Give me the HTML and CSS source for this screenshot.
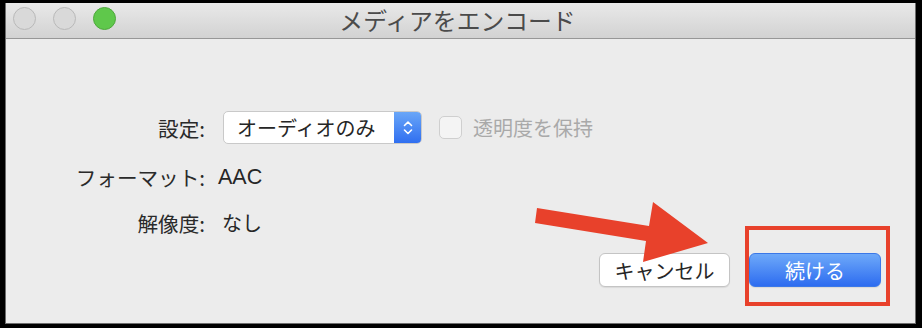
FILE: index.html
```html
<!DOCTYPE html>
<html lang="ja">
<head>
<meta charset="utf-8">
<title>メディアをエンコード</title>
<link rel="stylesheet" href="styles.css">
</head>
<body>
<div class="window">
  <div class="titlebar">
    <div class="lights">
      <span class="light"></span>
      <span class="light"></span>
      <span class="light green"></span>
    </div>
    <div class="title">メディアをエンコード</div>
  </div>
  <div class="content">
    <div class="form">
      <div class="label">設定:</div>
      <div class="value row-controls">
        <div class="popup">
          <span class="popup-text">オーディオのみ</span>
          <span class="stepper">
            <svg width="28" height="33" viewBox="0 0 28 33"><path d="M10.5 14.5 L14 11 L17.5 14.5" fill="none" stroke="#fff" stroke-width="1.6" stroke-linecap="round" stroke-linejoin="round"/><path d="M10.5 19 L14 22.5 L17.5 19" fill="none" stroke="#fff" stroke-width="1.6" stroke-linecap="round" stroke-linejoin="round"/></svg>
          </span>
        </div>
        <span class="checkbox"></span>
        <span class="check-label">透明度を保持</span>
      </div>
      <div class="label">フォーマット:</div>
      <div class="value latin">AAC</div>
      <div class="label">解像度:</div>
      <div class="value">なし</div>
    </div>
    <div class="buttons">
      <button class="btn">キャンセル</button>
      <button class="btn primary">続ける</button>
    </div>
  </div>
</div>
<svg class="annotation" width="922" height="328" viewBox="0 0 922 328">
  <polygon points="537,208 649,226 653,202 708,243 643,262 646,241 535,223" fill="#e8412b"/>
  <rect x="747" y="228" width="141" height="76" fill="none" stroke="#e8412b" stroke-width="4"/>
</svg>
</body>
</html>
```
FILE: styles.css
```css
html, body {
  margin: 0;
  padding: 0;
}
body {
  width: 922px;
  height: 328px;
  background: #000;
  overflow: hidden;
  position: relative;
  font-family: "Noto Sans CJK JP", sans-serif;
  color: #262626;
}
.window {
  box-sizing: border-box;
  margin: 3px 0 0 5px;
  width: 911px;
  height: 321px;
  background: #ececec;
  border: 1px solid #6e6e6e;
  border-top: none;
  display: flex;
  flex-direction: column;
}
.titlebar {
  position: relative;
  height: 36px;
  box-sizing: border-box;
  background: linear-gradient(#e9e9e9, #d2d2d2);
  border-bottom: 1px solid #979797;
  display: flex;
  align-items: flex-start;
}
.lights {
  display: flex;
  gap: 17px;
  padding: 4px 0 0 7px;
}
.light {
  width: 21px;
  height: 21px;
  border-radius: 50%;
  background: #d9d9d9;
  border: 1px solid #b9b9b9;
}
.light.green {
  background: #5fc84b;
  border-color: #4ea83c;
}
.title {
  position: absolute;
  left: 0;
  right: 0;
  top: 2px;
  text-align: center;
  font-size: 23.8px;
  line-height: 30px;
  color: #4b4b4b;
  padding-right: 6px;
}
.content {
  flex: 1;
  display: flex;
  flex-direction: column;
  padding: 72px 34px 36px 0;
}
.form {
  display: grid;
  grid-template-columns: 199px 1fr;
  column-gap: 17px;
  row-gap: 20px;
  align-items: center;
  font-size: 20px;
  line-height: 26px;
}
.label {
  text-align: right;
  font-size: 20.6px;
  color: #2a2a2a;
}
.value {
  color: #262626;
}
.value.latin {
  font-family: "Liberation Sans", sans-serif;
  font-size: 21.5px;
  margin-left: -4px;
}
.row-controls {
  display: flex;
  align-items: center;
}
.popup {
  box-sizing: border-box;
  width: 199px;
  height: 33px;
  display: flex;
  align-items: stretch;
  background: #fff;
  border: 1px solid #c9c9c9;
  border-radius: 5px;
  overflow: hidden;
  margin-left: 1px;
}
.popup-text {
  flex: 1;
  padding-left: 13px;
  line-height: 31px;
  font-size: 20px;
  color: #262626;
}
.stepper {
  width: 28px;
  margin: -1px -1px -1px 0;
  background: linear-gradient(#6ba8f8, #2e6df0);
  display: flex;
  align-items: center;
  justify-content: center;
}
.stepper svg {
  display: block;
}
.checkbox {
  box-sizing: border-box;
  width: 23px;
  height: 23px;
  margin-left: 17px;
  border: 1px solid #cfcfcf;
  border-radius: 5px;
  background: #f4f4f4;
}
.check-label {
  margin-left: 11px;
  color: #a9a9a9;
}
.buttons {
  margin-top: auto;
  display: flex;
  justify-content: flex-end;
  gap: 19px;
}
.btn {
  box-sizing: border-box;
  width: 131px;
  height: 34px;
  border: 1px solid #c4c4c4;
  border-radius: 6px;
  background: #fff;
  font-family: "Noto Sans CJK JP", sans-serif;
  font-size: 20px;
  color: #262626;
  padding: 0;
  box-shadow: 0 1px 1px rgba(0,0,0,0.08);
}
.btn.primary {
  width: 132px;
  border-color: #3b78e8;
  background: linear-gradient(#6ea9f9, #2d6cf0);
  color: #fff;
}
.annotation {
  position: absolute;
  left: 0;
  top: 0;
  pointer-events: none;
}
```
